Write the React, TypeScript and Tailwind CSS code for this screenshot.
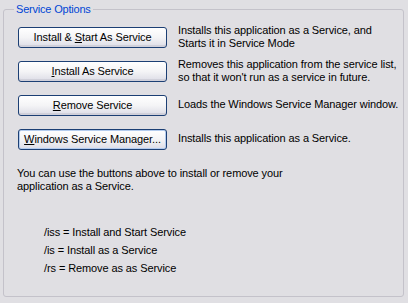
const rows = [
  {
    label: (
      <>
        Install &amp; <u>S</u>tart As Service
      </>
    ),
    text: ["Installs this application as a Service, and", "Starts it in Service Mode"],
  },
  {
    label: (
      <>
        <u>I</u>nstall As Service
      </>
    ),
    text: ["Removes this application from the service list,", "so that it won't run as a service in future."],
  },
  {
    label: (
      <>
        <u>R</u>emove Service
      </>
    ),
    text: ["Loads the Windows Service Manager window."],
  },
  {
    label: (
      <>
        <u>W</u>indows Service Manager...
      </>
    ),
    text: ["Installs this application as a Service."],
    focused: true,
  },
]

const XpButton = ({ children, focused }: { children: React.ReactNode; focused?: boolean }) => {
  return (
    <button
      className={
        "w-[149px] h-[21px] shrink-0 rounded-[3px] border border-[#1c3f74] bg-gradient-to-b from-white via-[#f4f4f6] to-[#dcdce6] text-[11px] leading-none text-black whitespace-nowrap overflow-hidden tracking-[-0.1px] " +
        (focused ? "shadow-[inset_0_0_0_1px_#b4ccee]" : "shadow-[inset_0_-2px_0_#d0d0da]")
      }
    >
      {children}
    </button>
  )
}

export default function App() {
  return (
    <div
      className="w-[408px] h-[303px] bg-[#e0dfe3] pt-[9px] pl-[3px] text-black text-[11px] tracking-[-0.1px]"
      style={{ fontFamily: '"Liberation Sans", Arial, sans-serif' }}
    >
      <div className="relative w-[401px] h-[288px] border border-[#c4c2ca] rounded-[3px] pl-[14px] pt-[17px]">
        <span className="absolute left-[10px] top-[-8px] bg-[#e0dfe3] px-[2px] text-[#0046d5] leading-[14px] tracking-[-0.2px]">
          Service Options
        </span>
        <div className="flex flex-col gap-[13px]">
          {rows.map((r, i) => (
            <div key={i} className="flex items-center gap-[11px] h-[21px]">
              <XpButton focused={r.focused}>{r.label}</XpButton>
              <div className="leading-[13px] whitespace-nowrap -mt-[2px]">
                {r.text.map((t, j) => (
                  <p key={j}>{t}</p>
                ))}
              </div>
            </div>
          ))}
        </div>
        <div className="mt-[17px] -ml-[1px] leading-[13px] whitespace-nowrap">
          <p>You can use the buttons above to install or remove your</p>
          <p>application as a Service.</p>
        </div>
        <div className="mt-[33px] ml-[26px] flex flex-col gap-[5px] leading-[13px] whitespace-nowrap">
          <p>/iss = Install and Start Service</p>
          <p>/is = Install as a Service</p>
          <p>/rs = Remove as as Service</p>
        </div>
      </div>
    </div>
  )
}
